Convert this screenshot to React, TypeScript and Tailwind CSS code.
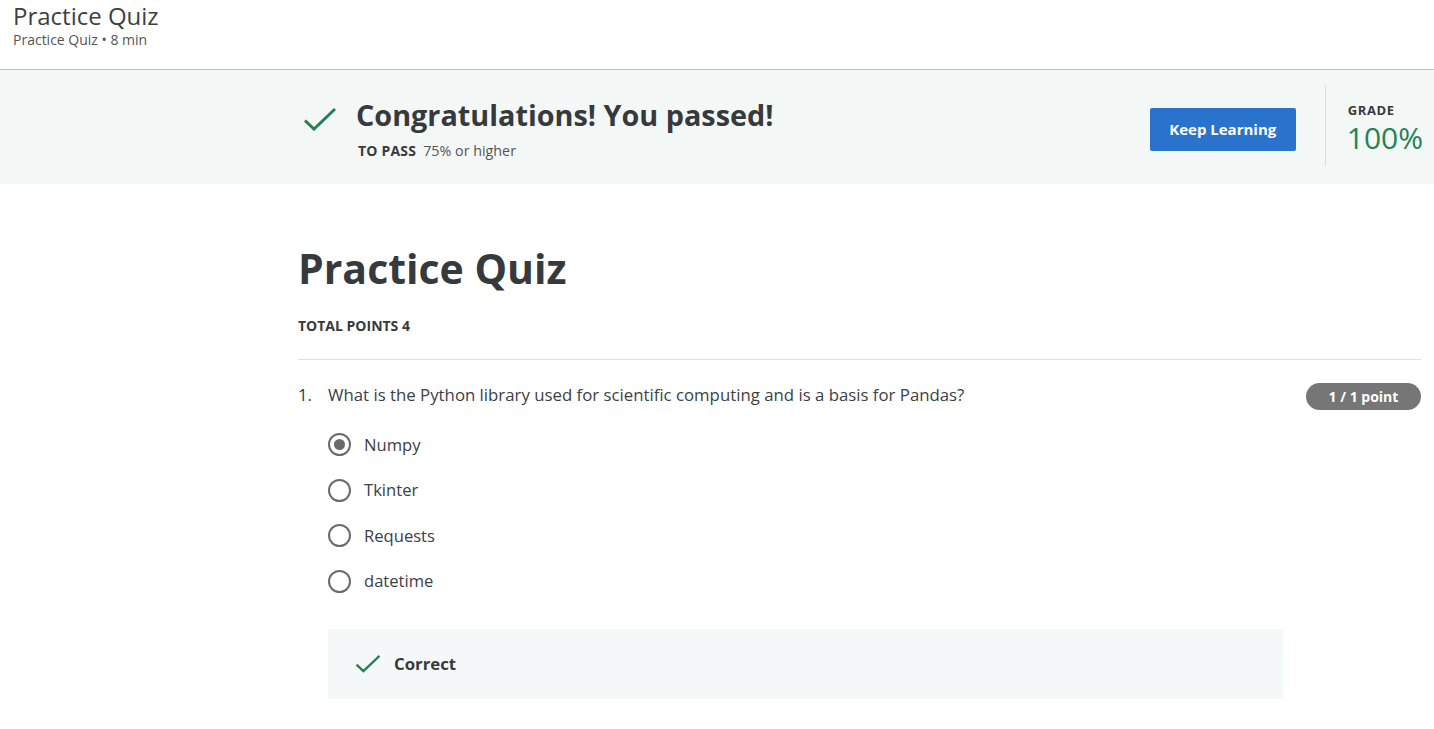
import React from "react";

const Check = ({ className }: { className?: string }) => (
  <svg className={className} viewBox="0 0 34 24" fill="none">
    <path d="M2 13.5 L11 22 L32 2" stroke="#1f8354" strokeWidth="3" />
  </svg>
);

const Radio = ({ checked }: { checked?: boolean }) => (
  <span className="w-[23px] h-[23px] rounded-full border-2 border-[#6b6b6b] flex items-center justify-center shrink-0">
    {checked && <span className="w-[11px] h-[11px] rounded-full bg-[#6b6b6b]" />}
  </span>
);

export default function App() {
  const font = { fontFamily: '"Open Sans", "Noto Sans", sans-serif' };
  const options = ["Numpy", "Tkinter", "Requests", "datetime"];
  return (
    <div className="w-[1434px] h-[729px] bg-white text-[#373a3c] overflow-hidden" style={font}>
      <div className="h-[70px] border-b border-[#c3c3c3] pl-[13px] pt-[1px]">
        <div className="text-[24px] leading-[29px] text-[#3d4044]">Practice Quiz</div>
        <div className="text-[14px] leading-[18px] mt-[1px] text-[#555]">Practice Quiz • 8 min</div>
      </div>
      <div className="h-[114px] bg-[#f3f8f6] flex items-center pl-[303px] pr-[11px]">
        <div className="flex items-start flex-1">
          <Check className="w-[34px] h-[24px] mt-[12px]" />
          <div className="ml-[19px]">
            <div className="text-[28.8px] font-bold leading-[40px] text-[#373a3c]">Congratulations! You passed!</div>
            <div className="text-[14.3px] leading-[18px] mt-[7px] ml-[2px]">
              <span className="font-bold text-[14px] tracking-[0.2px]">TO PASS</span>
              <span className="ml-[7px] text-[#555]">75% or higher</span>
            </div>
          </div>
        </div>
        <button className="w-[146px] h-[43px] bg-[#2a73cc] rounded-[2px] text-white font-bold text-[15px] mt-[4px]">
          Keep Learning
        </button>
        <div className="w-px h-[81px] bg-[#dcdcdc] ml-[29px] mt-[-3px]" />
        <div className="ml-[22px] mt-[7px]">
          <div className="text-[13px] font-bold leading-[14px] tracking-[0.6px] text-[#373a3c]">GRADE</div>
          <div className="text-[30px] leading-[42px] text-[#1f8354] ml-[-1px]">100%</div>
        </div>
      </div>
      <div className="pl-[298px] pr-[13px]">
        <h1 className="text-[41px] font-bold leading-[56px] mt-[56px] text-[#373a3c]">Practice Quiz</h1>
        <div className="text-[14px] font-bold leading-[18px] mt-[21px]">TOTAL POINTS 4</div>
        <div className="h-px bg-[#e0e0e0] mt-[24px]" />
        <div className="flex items-start mt-[24px]">
          <span className="w-[30px] text-[16.8px] leading-[22px]">1.</span>
          <div className="flex-1">
            <div className="text-[16.8px] leading-[22px] text-[#3d4044]">
              What is the Python library used for scientific computing and is a basis for Pandas?
            </div>
            <div className="mt-[27px] flex flex-col gap-[22.5px]">
              {options.map((o, i) => (
                <div key={o} className="flex items-center h-[23px]">
                  <Radio checked={i === 0} />
                  <span className="ml-[13px] text-[16.6px] leading-[22px] text-[#3d4044]">{o}</span>
                </div>
              ))}
            </div>
            <div className="mt-[36px] w-[955px] h-[70px] bg-[#f5f8f8] flex items-center pl-[27px]">
              <Check className="w-[26px] h-[19px]" />
              <span className="ml-[13px] text-[16.8px] font-bold text-[#373a3c]">Correct</span>
            </div>
          </div>
          <span className="mt-[-1px] h-[27px] w-[115px] rounded-full bg-[#767676] text-white text-[14px] font-bold flex items-center justify-center">
            1 / 1 point
          </span>
        </div>
      </div>
    </div>
  );
}
